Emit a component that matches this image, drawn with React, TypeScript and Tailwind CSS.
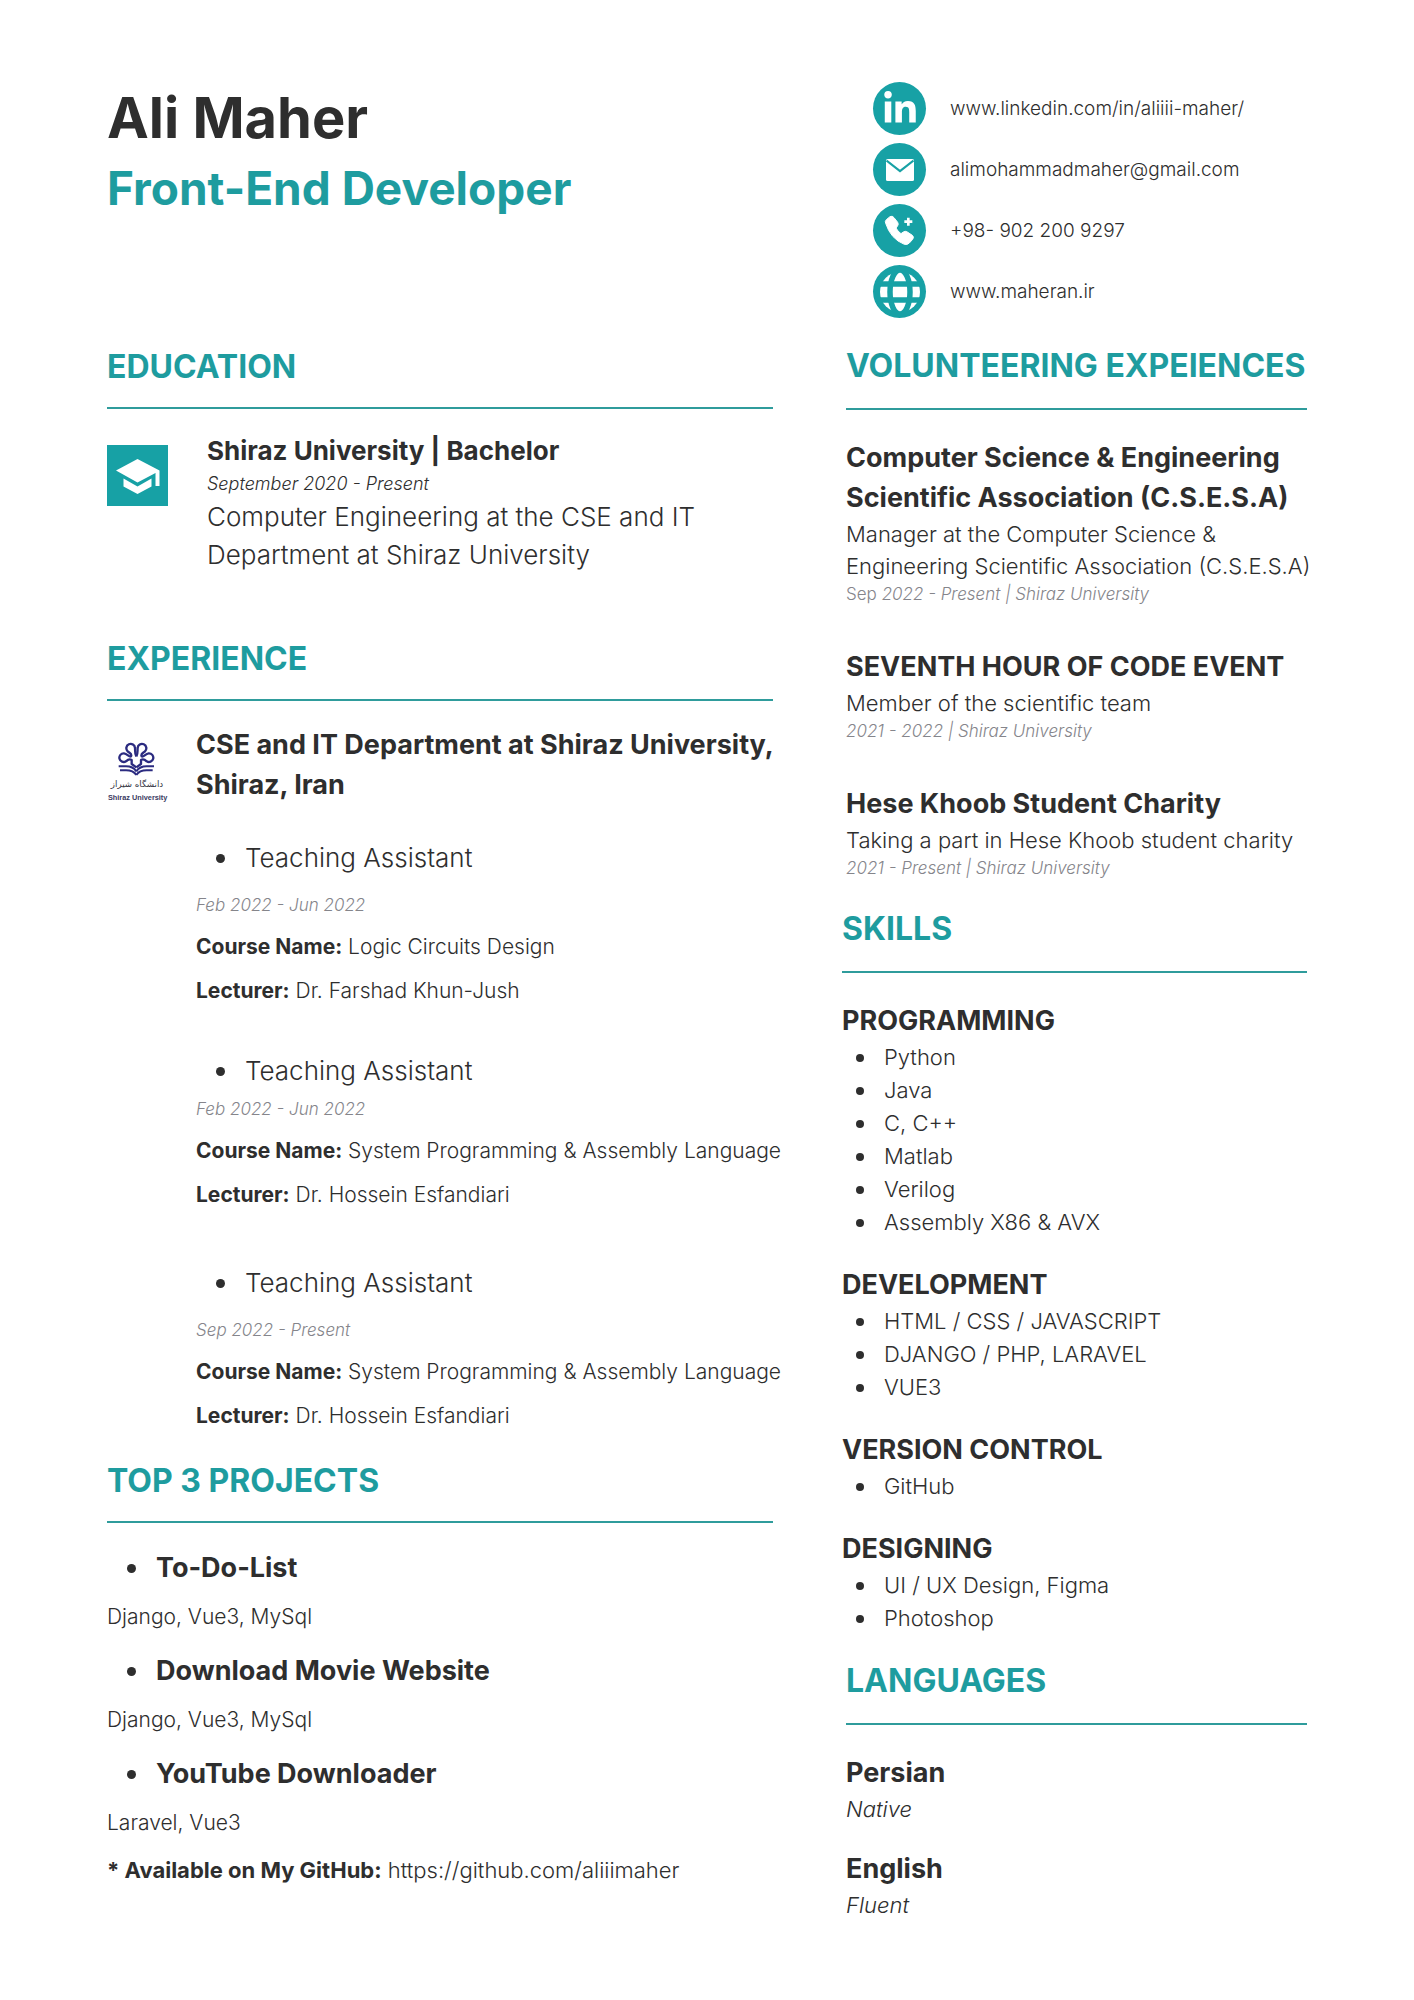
import type { ReactNode } from "react";
import { FaLinkedinIn } from "react-icons/fa";

const skills = [
  { title: "PROGRAMMING", items: ["Python", "Java", "C, C++", "Matlab", "Verilog", "Assembly X86 & AVX"] },
  { title: "DEVELOPMENT", items: ["HTML / CSS / JAVASCRIPT", "DJANGO / PHP, LARAVEL", "VUE3"] },
  { title: "VERSION CONTROL", items: ["GitHub"] },
  { title: "DESIGNING", items: ["UI / UX Design, Figma", "Photoshop"] },
];

const projects = [
  { name: "To-Do-List", stack: "Django, Vue3, MySql" },
  { name: "Download Movie Website", stack: "Django, Vue3, MySql" },
  { name: "YouTube Downloader", stack: "Laravel, Vue3" },
];

function Heading({ roomy, children }: { roomy?: boolean; children: ReactNode }) {
  return (
    <h2
      className={`${roomy ? "pb-[22px]" : "pb-5"} border-b-2 border-[#2f9c9c] text-[32px] leading-10 font-bold whitespace-nowrap text-[#1e9c9f]`}
    >
      {children}
    </h2>
  );
}

function Disc({ children }: { children: ReactNode }) {
  return <span className="flex size-[53px] items-center justify-center rounded-full bg-[#17a1a5]">{children}</span>;
}

function MailIcon() {
  return (
    <svg viewBox="0 0 28 22" className="h-[22px] w-7" aria-hidden="true">
      <rect width="28" height="22" rx="1.5" fill="#fff" />
      <path d="M0.5 1.5 14 12 27.500 1.5" fill="none" stroke="#17a1a5" strokeWidth="2.200" />
    </svg>
  );
}

function PhoneIcon() {
  return (
    <svg viewBox="39 400 159 159" className="size-[53px]" aria-hidden="true" fill="#fff">
      <path
        d="M77 458Q74 452 79 447L90 438Q97 434 102 441L113 455Q117 461 112 467L108 472Q113 482 123 489L130 484Q136 480 142 484L157 494Q163 499 158 506L148 517Q142 523 133 521Q92 505 77 458Z"
        stroke="#fff"
        strokeWidth="3"
      />
      <path d="M141 441h8v8h8v8h-8v8h-8v-8h-8v-8h8z" />
    </svg>
  );
}

function GlobeIcon() {
  return (
    <svg viewBox="-20 -20 40 40" className="size-10" aria-hidden="true">
      <circle r="20" fill="#fff" />
      <g fill="none" stroke="#17a1a5" strokeWidth="5.500">
        <ellipse rx="10" ry="22" />
        <path d="M-20-8H20M-20 8H20" />
      </g>
    </svg>
  );
}

function CapIcon() {
  return (
    <svg viewBox="0 0 61 61" className="size-[61px] bg-[#17a1a5]" aria-hidden="true" fill="#fff">
      <path d="M9 25.500 30.500 14 52.500 25.500V41H48.500V28L30.500 37.500Z" />
      <path d="M16.500 33.500 30.500 41.500 44.500 33.500V41.500L30.500 49 16.500 41.500Z" />
    </svg>
  );
}

function LogoHalf() {
  return (
    <>
      <path
        d="M97 52C92 44 94 36 93 27A13 13 0 1 0 71 37C76 42 85 44 81 52 76 56 70 44 60 43A13 13 0 1 0 66 67C72 61 77 59 83 63V75L97 85"
        strokeWidth="7"
      />
      <path d="M44 82H66C84 82 91 88 97 97M48 94H66C84 94 91 99 97 108" strokeWidth="6" />
    </>
  );
}

function ShirazLogo() {
  return (
    <svg viewBox="9 6 183 189" className="h-[63px] w-[61px]" role="img" aria-label="Shiraz University">
      <g fill="none" stroke="#2b2b80" strokeLinejoin="round">
        <LogoHalf />
        <g transform="translate(194) scale(-1 1)">
          <LogoHalf />
        </g>
      </g>
      <text x="99" y="144" textAnchor="middle" fontFamily="DejaVu Sans, sans-serif" fontSize="26" fill="#33333f">
        دانشگاه شیراز
      </text>
      <text x="101" y="184" textAnchor="middle" fontFamily="Liberation Sans, sans-serif" fontWeight="700" fontSize="22" fill="#3a3a62">
        Shiraz University
      </text>
    </svg>
  );
}

function Contact({ icon, href, children }: { icon: ReactNode; href: string; children: ReactNode }) {
  return (
    <li className="flex h-[61px] items-center gap-6">
      {icon}
      <a href={href} className="text-[19px] leading-7 font-light">
        {children}
      </a>
    </li>
  );
}

function Role({ date, course, lecturer, compact }: { date: string; course: string; lecturer: string; compact?: boolean }) {
  return (
    <li className={compact ? "mb-14" : "mb-12"}>
      <h4 className="flex items-center gap-5 pl-5 text-[26px] leading-9 font-light before:size-[9px] before:rounded-full before:bg-[#2e2e2e]">
        Teaching Assistant
      </h4>
      <p className={`${compact ? "mt-2" : "mt-[17px]"} text-[17px] leading-6 font-light text-[#85858b] italic`}>{date}</p>
      <p className="mt-4 text-[21px] leading-7 font-light whitespace-nowrap">
        <b className="font-bold">Course Name:</b> {course}
      </p>
      <p className="mt-4 text-[21px] leading-7 font-light">
        <b className="font-bold">Lecturer:</b> {lecturer}
      </p>
    </li>
  );
}

function Volunteering({ title, place, children }: { title: string; place: ReactNode; children: ReactNode }) {
  return (
    <article>
      <h3 className="text-[27px] leading-10 font-bold">{title}</h3>
      <p className="-mr-2 text-[22px] leading-8 font-light">{children}</p>
      <p className="text-[17px] leading-[25px] font-light text-[#85858b] italic">{place}</p>
    </article>
  );
}

export default function App() {
  return (
    <main className="grid min-h-screen grid-cols-[666fr_461fr] gap-x-[73px] bg-white px-[107px] pt-[78px] pb-16 font-['Inter',sans-serif] text-[#2e2e2e]">
      <div className="min-w-0">
        <header className="h-[269px] pt-2">
          <h1 className="text-[56px] leading-16 font-bold">Ali Maher</h1>
          <p className="mt-[10px] text-[46px] leading-14 font-bold text-[#1e9c9f]">Front-End Developer</p>
        </header>

        <section>
          <Heading>EDUCATION</Heading>
          <div className="mt-6 flex gap-[39px]">
            <div className="mt-3 shrink-0">
              <CapIcon />
            </div>
            <div>
              <h3 className="text-[26px] leading-9 font-bold">Shiraz University | Bachelor</h3>
              <p className="pt-px text-[18px] leading-7 font-light italic">September 2020 - Present</p>
              <p className="max-w-[520px] text-[26px] leading-[38px] font-light">
                Computer Engineering at the CSE and IT Department at Shiraz University
              </p>
            </div>
          </div>
        </section>

        <section className="mt-[65px]">
          <Heading>EXPERIENCE</Heading>
          <div className="mt-6 flex gap-7">
            <div className="mt-4 shrink-0">
              <ShirazLogo />
            </div>
            <div className="-mr-2 min-w-0">
              <h3 className="text-[27px] leading-10 font-bold">
                CSE and IT Department at Shiraz University, Shiraz, Iran
              </h3>
              <ul className="mt-[35px] -mb-[17px]">
                <Role date="Feb 2022 - Jun 2022" course="Logic Circuits Design" lecturer="Dr. Farshad Khun-Jush" />
                <Role
                  compact
                  date="Feb 2022 - Jun 2022"
                  course="System Programming & Assembly Language"
                  lecturer="Dr. Hossein Esfandiari"
                />
                <Role date="Sep 2022 - Present" course="System Programming & Assembly Language" lecturer="Dr. Hossein Esfandiari" />
              </ul>
            </div>
          </div>
        </section>

        <section>
          <Heading>TOP 3 PROJECTS</Heading>
          <ul className="mt-[27px] flex flex-col gap-5">
            {projects.map((project) => (
              <li key={project.name}>
                <h3 className="flex items-center gap-5 pl-5 text-[27px] leading-9 font-bold before:size-[9px] before:rounded-full before:bg-[#2e2e2e]">
                  {project.name}
                </h3>
                <p className="mt-[15px] text-[21px] leading-8 font-light">{project.stack}</p>
              </li>
            ))}
          </ul>
          <p className="mt-[15px] text-[22px] leading-8 font-light">
            <b className="font-bold">* Available on My GitHub:</b>{" "}
            <a href="https://github.com/aliiimaher">https://github.com/aliiimaher</a>
          </p>
        </section>
      </div>

      <div className="min-w-0">
        <ul className="mb-6 pl-[27px]">
          <Contact href="https://www.linkedin.com/in/aliiii-maher/" icon={<Disc><FaLinkedinIn className="size-9 text-white" /></Disc>}>
            www.linkedin.com/in/aliiii-maher/
          </Contact>
          <Contact href="mailto:alimohammadmaher@gmail.com" icon={<Disc><MailIcon /></Disc>}>
            alimohammadmaher@gmail.com
          </Contact>
          <Contact href="tel:+989022009297" icon={<Disc><PhoneIcon /></Disc>}>
            +98- 902 200 9297
          </Contact>
          <Contact href="https://www.maheran.ir" icon={<Disc><GlobeIcon /></Disc>}>
            www.maheran.ir
          </Contact>
        </ul>

        <section>
          <Heading roomy>VOLUNTEERING EXPEIENCES</Heading>
          <div className="mt-7 flex flex-col gap-10">
            <Volunteering
              title="Computer Science & Engineering Scientific Association (C.S.E.S.A)"
              place={<><span className="not-italic">Sep</span> 2022 - Present | Shiraz University</>}
            >
              Manager at the Computer Science & Engineering Scientific Association (C.S.E.S.A)
            </Volunteering>
            <Volunteering title="SEVENTH HOUR OF CODE EVENT" place="2021 - 2022 | Shiraz University">
              Member of the scientific team
            </Volunteering>
            <Volunteering title="Hese Khoob Student Charity" place="2021 - Present | Shiraz University">
              Taking a part in Hese Khoob student charity
            </Volunteering>
          </div>
        </section>

        <section className="mt-7 -ml-1">
          <Heading roomy>SKILLS</Heading>
          <div className="mt-7">
            {skills.map((group) => (
              <div key={group.title} className="mb-[26px]">
                <h3 className="text-[27px] leading-10 font-bold">{group.title}</h3>
                <ul>
                  {group.items.map((item) => (
                    <li
                      key={item}
                      className="flex items-center gap-5 pl-[14px] text-[22px] leading-[33px] font-light before:size-2 before:rounded-full before:bg-[#2e2e2e]"
                    >
                      {item}
                    </li>
                  ))}
                </ul>
              </div>
            ))}
          </div>
        </section>

        <section>
          <Heading roomy>LANGUAGES</Heading>
          <dl className="mt-7">
            <dt className="text-[27px] leading-10 font-bold">Persian</dt>
            <dd className="text-[22px] leading-8 font-light italic">Native</dd>
            <dt className="mt-6 text-[27px] leading-10 font-bold">English</dt>
            <dd className="text-[22px] leading-8 font-light italic">Fluent</dd>
          </dl>
        </section>
      </div>
    </main>
  );
}
